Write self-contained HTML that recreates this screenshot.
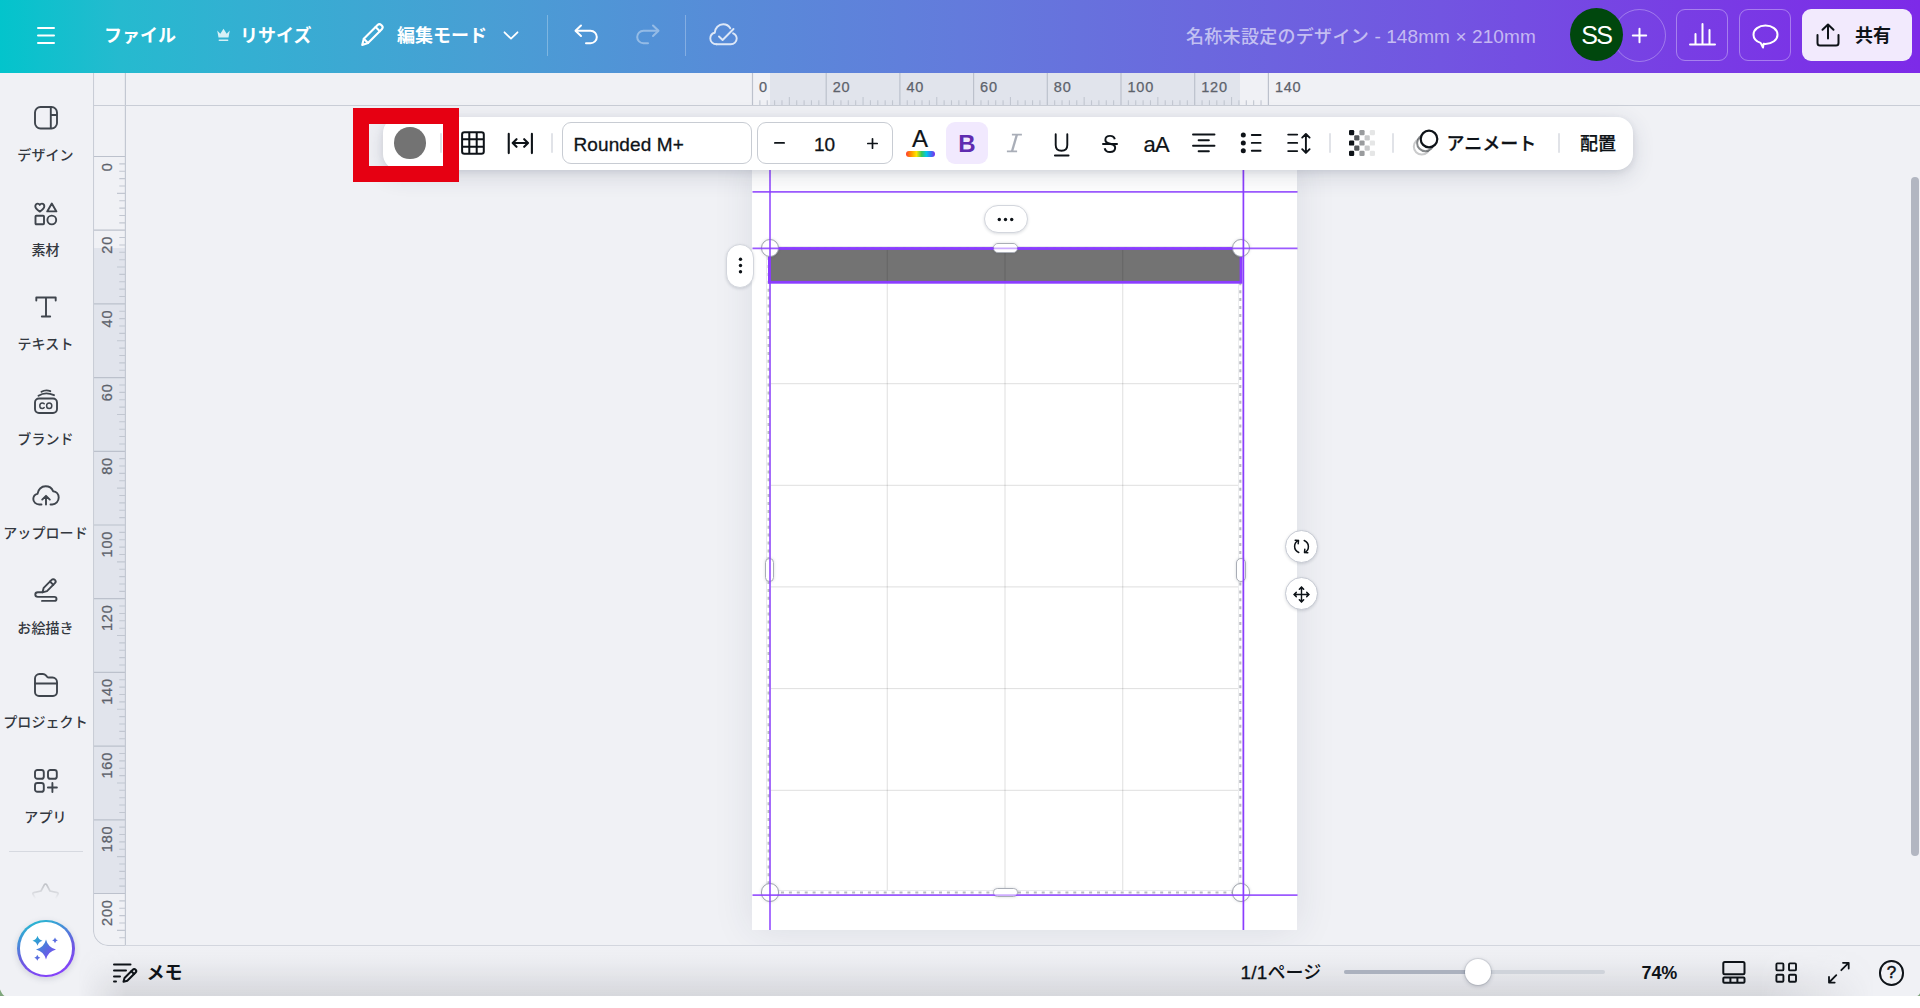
<!DOCTYPE html>
<html lang="ja">
<head>
<meta charset="utf-8">
<title>名称未設定のデザイン - Canva</title>
<style>
*{box-sizing:border-box;margin:0;padding:0}
html,body{width:1920px;height:1008px;overflow:hidden;background:#fff}
body{font-family:"Liberation Sans","Noto Sans CJK JP",sans-serif;color:#0e1318;-webkit-font-smoothing:antialiased}
#app{position:relative;width:1920px;height:1008px;overflow:hidden;background:#fff}
#ui{position:absolute;left:0;top:0;width:1920px;height:996px;background:#f0f1f5;overflow:hidden}
.abs{position:absolute}
svg{display:block;overflow:visible}
/* header */
#hdr{position:absolute;left:0;top:0;width:1920px;height:73px;background:linear-gradient(90deg,rgb(3,196,204) 0%,rgb(37,186,207) 6.25%,rgb(51,176,210) 12.5%,rgb(72,159,212) 25%,rgb(87,140,216) 37.5%,rgb(99,123,220) 50%,rgb(107,104,222) 62.5%,rgb(114,85,225) 75%,rgb(120,62,228) 87.5%,rgb(125,42,232) 100%);color:#fff}
#hdr .t{position:absolute;top:0;height:73px;line-height:73px;font-size:18px;font-weight:700;white-space:nowrap;letter-spacing:0}
#hdr .div{position:absolute;top:15px;width:1px;height:41px;background:rgba(255,255,255,.28)}
.hbtn{position:absolute;top:9px;width:52px;height:52px;border:1px solid rgba(255,255,255,.35);border-radius:9px}
/* sidebar */
#side{position:absolute;left:0;top:72px;width:93px;height:924px}
.sitem{position:absolute;left:0;width:91px;text-align:center;font-size:14px;font-weight:500;color:#33383f;white-space:nowrap;letter-spacing:.1px}
.sico{position:absolute}
.rl{font-family:"Liberation Sans",sans-serif;font-size:14.5px;fill:#5d626b;letter-spacing:.8px;stroke:#5d626b;stroke-width:.25px}
/* canvas */
#page{position:absolute;left:752px;top:156px;width:545.300px;height:774px;background:#fff;box-shadow:0 0 38px rgba(40,50,80,.10)}
.handle{position:absolute;background:#fff;border:1px solid #a9adb6;box-shadow:0 0 3px rgba(40,50,70,.18)}
.pill{position:absolute;background:#fff;border:1px solid #d3d6dd;box-shadow:0 1px 3px rgba(40,50,70,.16)}
/* toolbar */
#tb{position:absolute;left:383px;top:117px;width:1250px;height:53px;background:#fff;border-radius:16px;box-shadow:0 2px 6px rgba(50,60,90,.10),0 6px 22px rgba(50,60,90,.16)}
#tb .sep{position:absolute;top:16.400px;width:2.400px;height:20px;background:#e1e3e8;border-radius:1.200px;margin-left:-.2px}
#tb .tx{position:absolute;top:0;height:55px;line-height:55.500px;font-size:18px;font-weight:500;white-space:nowrap;color:#0e1318}
.lat{font-size:19px !important;-webkit-text-stroke:.3px currentColor}
/* footer */
#ft{position:absolute;left:93px;top:946px;width:1827px;height:50px}
#ft .tx{position:absolute;top:0;height:50px;line-height:54.500px;font-size:17px;font-weight:500;white-space:nowrap;color:#0e1318}
</style>
</head>
<body>
<div id="app">
<div id="ui">
<div class="abs" style="left:78px;top:946px;width:1842px;height:50px;pointer-events:none;background:linear-gradient(180deg,rgba(90,92,100,0) 0%,rgba(90,92,100,.02) 25%,rgba(90,92,100,.07) 55%,rgba(90,92,100,.13) 80%,rgba(90,92,100,.17) 100%);-webkit-mask-image:linear-gradient(90deg,transparent 0,#000 48px,#000 calc(100% - 160px),transparent calc(100% - 45px));mask-image:linear-gradient(90deg,transparent 0,#000 48px,#000 calc(100% - 160px),transparent calc(100% - 45px))"></div>
<svg class="abs" style="left:0;top:988px" width="6" height="8" viewBox="0 0 6 8"><path d="M0 1.500C1.200 4.500 2.800 6.800 4.500 8H0z" fill="#7fa67c"/></svg>
<svg class="abs" style="left:1917px;top:993px" width="3" height="3" viewBox="0 0 3 3"><path d="M3 .3C2.300 1.600 1.400 2.500.3 3H3z" fill="#7fa67c"/></svg>
<div id="hdr">
  <!-- hamburger -->
  <svg class="abs" style="left:33.700px;top:23.200px" width="24" height="24" viewBox="0 0 24 24" fill="none" stroke="#fff" stroke-width="2" stroke-linecap="round"><path d="M4 5h16M4 12.5h16M4 20h16"/></svg>
  <div class="t" style="left:104px">ファイル</div>
  <!-- crown -->
  <svg class="abs" style="left:216px;top:28px" width="15" height="14" viewBox="0 0 15 14" fill="#d6f0f6"><path d="M1.2 2.6l3.1 3.2L7.5 .8l3.2 5 3.1-3.2-1.3 7H2.5z"/><rect x="2.6" y="11.4" width="9.8" height="1.5" rx=".7"/></svg>
  <div class="t" style="left:240px">リサイズ</div>
  <!-- pencil -->
  <svg class="abs" style="left:360px;top:23px" width="24" height="24" viewBox="0 0 24 24" fill="none" stroke="#fff" stroke-width="2.1" stroke-linecap="round" stroke-linejoin="round"><path d="M2.2 22l1.6-6.2L17.6 2c1-1 2.600-1 3.600 0l.6.6c1 1 1 2.600 0 3.600L8 20z"/><path d="M3.800 15.800L8 20"/><path d="M15.600 4l4.200 4.200"/></svg>
  <div class="t" style="left:397px">編集モード</div>
  <svg class="abs" style="left:503px;top:31px" width="16" height="9" viewBox="0 0 16 9" fill="none" stroke="#fff" stroke-width="1.8" stroke-linecap="round" stroke-linejoin="round"><path d="M1.500 1.300L8 7.600l6.500-6.300"/></svg>
  <div class="div" style="left:547px"></div>
  <!-- undo -->
  <svg class="abs" style="left:574px;top:24px" width="25" height="21" viewBox="0 0 25 21" fill="none" stroke="#fff" stroke-width="2" stroke-linecap="round" stroke-linejoin="round"><path d="M7 1.500L1.500 6.800 7 12"/><path d="M2 6.800h14.500c3.600 0 6.300 2.700 6.300 6.200s-2.700 6.200-6.300 6.200H12"/></svg>
  <!-- redo -->
  <svg class="abs" style="left:635px;top:24px;opacity:.38" width="25" height="21" viewBox="0 0 25 21" fill="none" stroke="#fff" stroke-width="2" stroke-linecap="round" stroke-linejoin="round"><path d="M18 1.500l5.500 5.300L18 12"/><path d="M23 6.800H8.500C4.900 6.800 2.200 9.500 2.200 13s2.700 6.200 6.300 6.200H13"/></svg>
  <div class="div" style="left:685px"></div>
  <!-- cloud check -->
  <svg class="abs" style="left:709px;top:22px;opacity:.8" width="29" height="24" viewBox="0 0 29 24" fill="none" stroke="#fff" stroke-width="1.900" stroke-linecap="round" stroke-linejoin="round"><path d="M7.500 22.300C4 22.300 1.300 19.700 1.300 16.400c0-2.800 1.900-5.100 4.500-5.700C6 6 9.600 2.300 14.200 2.300c3 0 5.700 1.600 7.100 4"/><path d="M7.500 22.300h14.200c3.300 0 6-2.500 6-5.700 0-2.400-1.500-4.400-3.600-5.300"/><path d="M10 14.500l3.600 3.500L24.500 7"/></svg>
  <div class="t" style="left:1186px;font-weight:500;color:rgba(255,255,255,.6);font-size:18px;letter-spacing:.3px">名称未設定のデザイン<span style="font-size:19px;letter-spacing:.1px"> - 148mm × 210mm</span></div>
  <!-- plus circle -->
  <div class="abs" style="left:1613px;top:9px;width:53px;height:53px;border-radius:50%;border:1px solid rgba(255,255,255,.3)"></div>
  <svg class="abs" style="left:1631px;top:27px" width="17" height="17" viewBox="0 0 17 17" stroke="#fff" stroke-width="2" stroke-linecap="round"><path d="M8.500 1.800v13.400M1.800 8.500h13.400"/></svg>
  <!-- avatar -->
  <div class="abs" style="left:1570.200px;top:8.200px;width:53.300px;height:53.300px;border-radius:50%;background:#00470d;color:#fff;font-size:25px;line-height:54px;text-align:center;font-weight:400;letter-spacing:-1.5px;text-indent:-1px">SS</div>
  <!-- chart -->
  <div class="hbtn" style="left:1676px"></div>
  <svg class="abs" style="left:1689px;top:22px" width="27" height="24" viewBox="0 0 27 24" fill="none" stroke="#fff" stroke-width="2" stroke-linecap="round"><path d="M1 22.500h25M6.500 22V12M13.500 22V2M20.500 22V8"/></svg>
  <!-- comment -->
  <div class="hbtn" style="left:1739px"></div>
  <svg class="abs" style="left:1752px;top:24px" width="27" height="25" viewBox="0 0 27 25" fill="none" stroke="#fff" stroke-width="2" stroke-linejoin="round"><path d="M13.500 1.500c6.600 0 12 3.900 12 9.200 0 5.200-5.400 9.200-12 9.200-.6 0-1.300 0-1.900-.1L11 23.500l-2.400-4.600C4.400 17.500 1.500 14.400 1.500 10.700c0-5.300 5.400-9.200 12-9.200z"/></svg>
  <!-- share -->
  <div class="abs" style="left:1802px;top:9px;width:110px;height:52px;border-radius:9px;background:#f2eafd"></div>
  <svg class="abs" style="left:1816px;top:23px" width="24" height="24" viewBox="0 0 24 24" fill="none" stroke="#0e1318" stroke-width="2" stroke-linecap="round" stroke-linejoin="round"><path d="M12 15.500V1.500M6.500 6.800L12 1.500l5.500 5.300"/><path d="M1.500 12v8c0 1.400 1.100 2.500 2.500 2.500h16c1.400 0 2.500-1.100 2.500-2.500v-8"/></svg>
  <div class="t" style="left:1855px;color:#0e1318">共有</div>
</div>
<div id="side">
  <!-- design -->
  <svg class="sico" style="left:34px;top:34px" width="24" height="24" viewBox="0 0 24 24" fill="none" stroke="#3f454d" stroke-width="1.900" stroke-linejoin="round"><rect x="1" y="1" width="22" height="21.500" rx="5.500"/><path d="M16.800 1v21.500M16.800 9H23"/></svg>
  <div class="sitem" style="top:72px;line-height:22px">デザイン</div>
  <!-- elements -->
  <svg class="sico" style="left:34px;top:130px" width="24" height="24" viewBox="0 0 24 24" fill="none" stroke="#3f454d" stroke-width="1.900" stroke-linejoin="round"><path d="M5.800 9.600C3 7.700 1.300 6.100 1.300 4.200c0-1.500 1.100-2.600 2.400-2.600.9 0 1.700.5 2.100 1.300.4-.8 1.200-1.300 2.100-1.300 1.300 0 2.400 1.100 2.400 2.600 0 1.900-1.700 3.500-4.500 5.400z"/><path d="M17.800 1.600l4.600 7.800h-9.200z"/><rect x="1.500" y="13.800" width="8.500" height="8.500" rx=".8"/><circle cx="17.800" cy="18" r="4.400"/></svg>
  <div class="sitem" style="top:167px;line-height:22px">素材</div>
  <!-- text -->
  <svg class="sico" style="left:35px;top:224px" width="22" height="22" viewBox="0 0 22 22" fill="none" stroke="#3f454d" stroke-width="1.900" stroke-linecap="round" stroke-linejoin="round"><path d="M1.300 4.500V1.500h19.400v3M11 1.500v19M6.800 20.500h8.400"/></svg>
  <div class="sitem" style="top:261px;line-height:22px">テキスト</div>
  <!-- brand -->
  <svg class="sico" style="left:34px;top:317px" width="24" height="25" viewBox="0 0 24 25" fill="none" stroke="#3f454d" stroke-width="1.900" stroke-linecap="round" stroke-linejoin="round"><rect x="1" y="9.500" width="22" height="14.500" rx="4"/><path d="M4.500 6.800c3-2 9-3.600 15.500-.6"/><path d="M7.500 2.800c2.600-1.600 5.800-1.900 8.800-.6"/><path d="M10.200 14.800c-.5-.6-1.100-.9-1.900-.9-1.500 0-2.500 1.100-2.500 2.800s1 2.800 2.500 2.800c.8 0 1.400-.3 1.900-.9" stroke-width="1.500"/><ellipse cx="15.200" cy="16.700" rx="2.600" ry="2.800" stroke-width="1.500"/></svg>
  <div class="sitem" style="top:356px;line-height:22px">ブランド</div>
  <!-- upload -->
  <svg class="sico" style="left:32px;top:413px" width="28" height="21" viewBox="0 0 28 21" fill="none" stroke="#3f454d" stroke-width="1.900" stroke-linecap="round" stroke-linejoin="round"><path d="M9.500 19.500H7.200c-3.300 0-5.900-2.400-5.900-5.400 0-2.500 1.700-4.600 4.200-5.200C6 4.500 9.300 1.300 13.600 1.300c3.400 0 6.300 2 7.500 4.900 3.200.3 5.600 3 5.600 6.400 0 3.700-2.800 6.900-6.500 6.900h-1.700"/><path d="M14 19.500v-8.200M10.200 14.600L14 10.800l3.800 3.800"/></svg>
  <div class="sitem" style="top:450px;line-height:22px">アップロード</div>
  <!-- draw -->
  <svg class="sico" style="left:34px;top:506px" width="24" height="24" viewBox="0 0 24 24" fill="none" stroke="#3f454d" stroke-width="1.900" stroke-linecap="round" stroke-linejoin="round"><path d="M8.500 14.300l1.200-4.500L17.600 1.900c.9-.9 2.400-.9 3.300 0s.9 2.400 0 3.300L13 13.100z"/><path d="M16 3.500l3.300 3.300"/><path d="M8.500 14.300H3.800c-1.400 0-2.500 1-2.500 2.300s1.100 2.300 2.500 2.300h16.500c1.200 0 2.200.9 2.200 2s-1 2-2.200 2H8"/></svg>
  <div class="sitem" style="top:545px;line-height:22px">お絵描き</div>
  <!-- projects -->
  <svg class="sico" style="left:34px;top:601px" width="24" height="24" viewBox="0 0 24 24" fill="none" stroke="#3f454d" stroke-width="1.900" stroke-linecap="round" stroke-linejoin="round"><path d="M1 19V5.500C1 3 3 1 5.500 1h3.300c1.200 0 2.300.5 3.100 1.400l1.300 1.500c.4.400.9.600 1.400.6h3.900C21 4.500 23 6.500 23 9v10c0 2.200-1.800 4-4 4H5c-2.200 0-4-1.800-4-4z"/><path d="M1 10.500h22"/></svg>
  <div class="sitem" style="top:639px;line-height:22px">プロジェクト</div>
  <!-- apps -->
  <svg class="sico" style="left:34px;top:697px" width="24" height="24" viewBox="0 0 24 24" fill="none" stroke="#3f454d" stroke-width="1.900" stroke-linecap="round" stroke-linejoin="round"><rect x="1" y="1" width="8.800" height="8.800" rx="2.400"/><rect x="14" y="1" width="8.800" height="8.800" rx="2.400"/><rect x="1" y="14" width="8.800" height="8.800" rx="2.400"/><path d="M18.400 14v9M13.900 18.500h9"/></svg>
  <div class="sitem" style="top:734px;line-height:22px">アプリ</div>
  <div class="abs" style="left:9px;top:778.600px;width:73.500px;height:1.200px;background:#d6d9e0"></div>
  <!-- faded star -->
  <svg class="sico" style="left:30px;top:808px" width="32" height="20" viewBox="30 880 32 20" fill="none" stroke-width="1.700" stroke-linejoin="round" stroke-linecap="round"><defs><linearGradient id="fs" x1="0" y1="882" x2="0" y2="899" gradientUnits="userSpaceOnUse"><stop offset="0" stop-color="#3f454d" stop-opacity=".3"/><stop offset=".6" stop-color="#3f454d" stop-opacity=".14"/><stop offset="1" stop-color="#3f454d" stop-opacity="0"/></linearGradient></defs><path stroke="url(#fs)" d="M35.500 899L33 894.200c-.4-.7 0-1.400.8-1.600l7.200-1.600 3.400-6.300c.5-.9 1.700-.9 2.200 0l3.400 6.300 7.200 1.600c.8.200 1.200.9.800 1.600L55.500 899"/></svg>
  <!-- magic button -->
  <div class="abs" style="left:17.200px;top:847.800px;width:57.500px;height:57.500px;border-radius:50%;background:linear-gradient(160deg,#22c1d0 5%,#6a5be0 55%,#8b3dff 95%);box-shadow:0 2px 6px rgba(60,70,100,.18)"></div>
  <div class="abs" style="left:19.500px;top:850.100px;width:52.900px;height:52.900px;border-radius:50%;background:#fff"></div>
  <svg class="sico" style="left:31px;top:862px" width="30" height="30" viewBox="0 0 30 30"><defs><linearGradient id="mg" x1="0" y1="0" x2="1" y2="1"><stop offset="0" stop-color="#1fb6cf"/><stop offset=".55" stop-color="#5a6ae0"/><stop offset="1" stop-color="#8b3dff"/></linearGradient></defs><path fill="url(#mg)" d="M15.00 5.50Q17.00 13.50 25.00 15.50Q17.00 17.50 15.00 25.50Q13.00 17.50 5.00 15.50Q13.00 13.50 15.00 5.50zM6.50 1.80Q7.50 5.80 11.50 6.80Q7.50 7.80 6.50 11.80Q5.50 7.80 1.50 6.80Q5.50 5.80 6.50 1.80zM24.00 3.40Q24.58 5.72 26.90 6.30Q24.58 6.88 24.00 9.20Q23.42 6.88 21.10 6.30Q23.42 5.72 24.00 3.40zM6.30 20.80Q6.90 23.20 9.30 23.80Q6.90 24.40 6.30 26.80Q5.70 24.40 3.30 23.80Q5.70 23.20 6.30 20.80z"/></svg>
</div>
<div id="hr" class="abs" style="left:125px;top:73px;width:1795px;height:33px;overflow:hidden">
<div class="abs" style="left:644.7px;top:0;width:470.6px;height:32px;background:#e1e4ec"></div>
<svg class="abs" style="left:0;top:0" width="1795" height="33" viewBox="125 73 1795 33">
<path d="M759.87 100.3V105.5M767.24 100.3V105.5M774.61 100.3V105.5M781.98 100.3V105.5M796.72 100.3V105.5M804.09 100.3V105.5M811.46 100.3V105.5M818.83 100.3V105.5M833.57 100.3V105.5M840.94 100.3V105.5M848.31 100.3V105.5M855.68 100.3V105.5M870.42 100.3V105.5M877.79 100.3V105.5M885.16 100.3V105.5M892.53 100.3V105.5M907.27 100.3V105.5M914.64 100.3V105.5M922.01 100.3V105.5M929.38 100.3V105.5M944.12 100.3V105.5M951.49 100.3V105.5M958.86 100.3V105.5M966.23 100.3V105.5M980.97 100.3V105.5M988.34 100.3V105.5M995.71 100.3V105.5M1003.08 100.3V105.5M1017.82 100.3V105.5M1025.19 100.3V105.5M1032.56 100.3V105.5M1039.93 100.3V105.5M1054.67 100.3V105.5M1062.04 100.3V105.5M1069.41 100.3V105.5M1076.78 100.3V105.5M1091.52 100.3V105.5M1098.89 100.3V105.5M1106.26 100.3V105.5M1113.63 100.3V105.5M1128.37 100.3V105.5M1135.74 100.3V105.5M1143.11 100.3V105.5M1150.48 100.3V105.5M1165.22 100.3V105.5M1172.59 100.3V105.5M1179.96 100.3V105.5M1187.33 100.3V105.5M1202.07 100.3V105.5M1209.44 100.3V105.5M1216.81 100.3V105.5M1224.18 100.3V105.5M1238.92 100.3V105.5M1246.29 100.3V105.5M1253.66 100.3V105.5M1261.03 100.3V105.5M789.35 97V105.5M863.05 97V105.5M936.75 97V105.5M1010.45 97V105.5M1084.15 97V105.5M1157.85 97V105.5M1231.55 97V105.5" stroke="#c2c7d1" stroke-width="1.1" fill="none"/>
<path d="M752.50 73V105.5M826.20 73V105.5M899.90 73V105.5M973.60 73V105.5M1047.30 73V105.5M1121.00 73V105.5M1194.70 73V105.5M1268.40 73V105.5" stroke="#bcc1cc" stroke-width="1.2" fill="none"/>
<path d="M125 105.5H1920" stroke="#c9cdd6" stroke-width="1.2" fill="none"/>
<text x="759.0" y="92" class="rl">0</text>
<text x="832.7" y="92" class="rl">20</text>
<text x="906.4" y="92" class="rl">40</text>
<text x="980.1" y="92" class="rl">60</text>
<text x="1053.8" y="92" class="rl">80</text>
<text x="1127.5" y="92" class="rl">100</text>
<text x="1201.2" y="92" class="rl">120</text>
<text x="1274.9" y="92" class="rl">140</text>
</svg></div>
<div id="vr" class="abs" style="left:93px;top:73px;width:33px;height:873px;overflow:hidden;border-bottom-left-radius:15px">
<div class="abs" style="left:0;top:175.3px;width:32px;height:645.1px;background:#e1e4ec"></div>
<svg class="abs" style="left:0;top:0" width="33" height="873" viewBox="93 73 33 873">
<path d="M119.3 163.87H125.5M119.3 171.24H125.5M119.3 178.61H125.5M119.3 185.98H125.5M119.3 200.72H125.5M119.3 208.09H125.5M119.3 215.46H125.5M119.3 222.83H125.5M119.3 237.57H125.5M119.3 244.94H125.5M119.3 252.31H125.5M119.3 259.68H125.5M119.3 274.42H125.5M119.3 281.79H125.5M119.3 289.16H125.5M119.3 296.53H125.5M119.3 311.27H125.5M119.3 318.64H125.5M119.3 326.01H125.5M119.3 333.38H125.5M119.3 348.12H125.5M119.3 355.49H125.5M119.3 362.86H125.5M119.3 370.23H125.5M119.3 384.97H125.5M119.3 392.34H125.5M119.3 399.71H125.5M119.3 407.08H125.5M119.3 421.82H125.5M119.3 429.19H125.5M119.3 436.56H125.5M119.3 443.93H125.5M119.3 458.67H125.5M119.3 466.04H125.5M119.3 473.41H125.5M119.3 480.78H125.5M119.3 495.52H125.5M119.3 502.89H125.5M119.3 510.26H125.5M119.3 517.63H125.5M119.3 532.37H125.5M119.3 539.74H125.5M119.3 547.11H125.5M119.3 554.48H125.5M119.3 569.22H125.5M119.3 576.59H125.5M119.3 583.96H125.5M119.3 591.33H125.5M119.3 606.07H125.5M119.3 613.44H125.5M119.3 620.81H125.5M119.3 628.18H125.5M119.3 642.92H125.5M119.3 650.29H125.5M119.3 657.66H125.5M119.3 665.03H125.5M119.3 679.77H125.5M119.3 687.14H125.5M119.3 694.51H125.5M119.3 701.88H125.5M119.3 716.62H125.5M119.3 723.99H125.5M119.3 731.36H125.5M119.3 738.73H125.5M119.3 753.47H125.5M119.3 760.84H125.5M119.3 768.21H125.5M119.3 775.58H125.5M119.3 790.32H125.5M119.3 797.69H125.5M119.3 805.06H125.5M119.3 812.43H125.5M119.3 827.17H125.5M119.3 834.54H125.5M119.3 841.91H125.5M119.3 849.28H125.5M119.3 864.02H125.5M119.3 871.39H125.5M119.3 878.76H125.5M119.3 886.13H125.5M119.3 900.87H125.5M119.3 908.24H125.5M119.3 915.61H125.5M119.3 922.98H125.5M119.3 937.72H125.5M117 193.35H125.5M117 267.05H125.5M117 340.75H125.5M117 414.45H125.5M117 488.15H125.5M117 561.85H125.5M117 635.55H125.5M117 709.25H125.5M117 782.95H125.5M117 856.65H125.5M117 930.35H125.5" stroke="#c2c7d1" stroke-width="1.1" fill="none"/>
<path d="M93 156.50H125.5M93 230.20H125.5M93 303.90H125.5M93 377.60H125.5M93 451.30H125.5M93 525.00H125.5M93 598.70H125.5M93 672.40H125.5M93 746.10H125.5M93 819.80H125.5M93 893.50H125.5" stroke="#bcc1cc" stroke-width="1.2" fill="none"/>
<path d="M125.5 73V945.5" stroke="#c3c8d2" stroke-width="1.400" fill="none"/>
<path d="M93.500 73V930.5a15 15 0 0 0 15 15H126" stroke="#c9cdd6" stroke-width="1.1" fill="none"/>
<path d="M93 105.5H126" stroke="#c9cdd6" stroke-width="1.2" fill="none"/>
<text transform="translate(112.2 162.3) rotate(-90)" text-anchor="end" class="rl">0</text>
<text transform="translate(112.2 236.0) rotate(-90)" text-anchor="end" class="rl">20</text>
<text transform="translate(112.2 309.7) rotate(-90)" text-anchor="end" class="rl">40</text>
<text transform="translate(112.2 383.4) rotate(-90)" text-anchor="end" class="rl">60</text>
<text transform="translate(112.2 457.1) rotate(-90)" text-anchor="end" class="rl">80</text>
<text transform="translate(112.2 530.8) rotate(-90)" text-anchor="end" class="rl">100</text>
<text transform="translate(112.2 604.5) rotate(-90)" text-anchor="end" class="rl">120</text>
<text transform="translate(112.2 678.2) rotate(-90)" text-anchor="end" class="rl">140</text>
<text transform="translate(112.2 751.9) rotate(-90)" text-anchor="end" class="rl">160</text>
<text transform="translate(112.2 825.6) rotate(-90)" text-anchor="end" class="rl">180</text>
<text transform="translate(112.2 899.3) rotate(-90)" text-anchor="end" class="rl">200</text>
</svg></div>
<div class="abs" style="left:125px;top:945px;width:1795px;height:1px;background:#d3d6de"></div>
<div id="ws" class="abs" style="left:126px;top:106px;width:1794px;height:839px;overflow:hidden">
<div class="abs" style="left:-126px;top:-106px;width:1920px;height:1008px">
  <div id="page"></div>
  <svg class="abs" style="left:0;top:0" width="1920" height="1008" viewBox="0 0 1920 1008" fill="none">
    <!-- grid lines -->
    <path d="M887.250 248.400V892.500M1005 248.400V892.500M1122.750 248.400V892.500" stroke="#000" stroke-opacity=".13" stroke-width="1"/>
    <path d="M769.500 383.700H1240.500M769.500 485.300H1240.500M769.500 586.900H1240.500M769.500 688.600H1240.500M769.500 790.300H1240.500" stroke="#000" stroke-opacity=".13" stroke-width="1"/>
    <!-- dashed table outline -->
    <rect x="768.600" y="248.400" width="471.700" height="644.100" stroke="#d9dbdf" stroke-width="4.600"/>
    <rect x="768.600" y="248.400" width="471.700" height="644.100" stroke="#fff" stroke-width="3.600"/>
    <rect x="768.600" y="248.400" width="471.700" height="644.100" stroke="#b9bcc2" stroke-width="2.100" stroke-dasharray="3 4.900"/>
    <!-- table header fill -->
    <rect x="769.500" y="248.400" width="471" height="33.800" fill="#737373"/>
    <path d="M887.250 248.400V282.200M1005 248.400V282.200M1122.750 248.400V282.200" stroke="#000" stroke-opacity=".13" stroke-width="1"/>
    <!-- selection -->
    <rect x="769.400" y="248.500" width="471.600" height="33.800" stroke="#8b3dff" stroke-width="2.800"/>
  </svg>
  <!-- corner handles -->
  <div class="handle" style="left:761px;top:239.500px;width:18.400px;height:18.400px;border-radius:50%;background:#fff;margin:-.6px 0 0 -.5px;border-color:#9ea3ac"></div>
  <div class="handle" style="left:1232px;top:239.500px;width:18.400px;height:18.400px;border-radius:50%;background:#fff;margin:-.6px 0 0 -.5px;border-color:#9ea3ac"></div>
  <div class="handle" style="left:761px;top:884px;width:18.400px;height:18.400px;border-radius:50%;background:#fff;margin:-.6px 0 0 -.5px;border-color:#9ea3ac"></div>
  <div class="handle" style="left:1232px;top:884px;width:18.400px;height:18.400px;border-radius:50%;background:#fff;margin:-.6px 0 0 -.5px;border-color:#9ea3ac"></div>
  <!-- edge handles -->
  <div class="handle" style="left:993px;top:243.300px;width:24.500px;height:9.500px;border-radius:5px"></div>
  <div class="handle" style="left:993px;top:887.800px;width:24.500px;height:9.500px;border-radius:5px"></div>
  <div class="handle" style="left:764.700px;top:557.500px;width:9.500px;height:24.500px;border-radius:5px"></div>
  <div class="handle" style="left:1236px;top:557.500px;width:9.500px;height:24.500px;border-radius:5px"></div>
  <svg class="abs" style="left:0;top:0" width="1920" height="1008" viewBox="0 0 1920 1008" fill="none">
    <path d="M770 156V930" stroke="#8b3dff" stroke-width="1.900" stroke-opacity=".78"/><path d="M1243.400 156V930" stroke="#8b3dff" stroke-width="1.700"/>
    <path d="M752.500 191.900H1297.500M752.500 248.400H1297.500M752.500 895.200H1297.500" stroke="#8b3dff" stroke-width="1.800" stroke-opacity=".85"/>
  </svg>
  <div class="abs" style="left:994px;top:244.300px;width:22.500px;height:7.500px;border-radius:4px;background:rgba(255,255,255,.5)"></div>
  <div class="abs" style="left:994px;top:888.800px;width:22.500px;height:7.500px;border-radius:4px;background:rgba(255,255,255,.5)"></div>
  <!-- more pills -->
  <div class="pill" style="left:983.500px;top:205.400px;width:44px;height:28px;border-radius:14px"></div>
  <svg class="abs" style="left:997px;top:217px" width="17" height="5" viewBox="0 0 17 5" fill="#0e1318"><circle cx="2.300" cy="2.500" r="1.700"/><circle cx="8.500" cy="2.500" r="1.700"/><circle cx="14.700" cy="2.500" r="1.700"/></svg>
  <div class="pill" style="left:726px;top:243.500px;width:28px;height:44px;border-radius:14px"></div>
  <svg class="abs" style="left:737.500px;top:257px" width="5" height="17" viewBox="0 0 5 17" fill="#0e1318"><circle cy="2.300" cx="2.500" r="1.700"/><circle cy="8.500" cx="2.500" r="1.700"/><circle cy="14.700" cx="2.500" r="1.700"/></svg>
  <!-- rotate / move -->
  <div class="pill" style="left:1284.700px;top:529.700px;width:33px;height:33px;border-radius:50%;border-color:#c6cad3"></div>
  <svg class="abs" style="left:1293px;top:538px" width="17" height="17" viewBox="0 0 17 17" fill="none" stroke="#0e1318" stroke-width="1.500" stroke-linecap="round" stroke-linejoin="round"><path d="M5.800 14.500C3.200 13.400 1.600 11 1.600 8.300c0-2.500 1.500-4.700 3.700-5.700"/><path d="M2.200 2.300l3.300.2-.3 3.200"/><path d="M11.200 2.500c2.600 1.100 4.200 3.500 4.200 6.200 0 2.500-1.500 4.700-3.700 5.700"/><path d="M14.800 14.700l-3.300-.2.300-3.200"/></svg>
  <div class="pill" style="left:1284.700px;top:577.300px;width:33px;height:33px;border-radius:50%;border-color:#c6cad3"></div>
  <svg class="abs" style="left:1293px;top:585.500px" width="17" height="17" viewBox="0 0 17 17" fill="none" stroke="#0e1318" stroke-width="1.400" stroke-linecap="round" stroke-linejoin="round"><path d="M8.500 1.200v14.600M1.200 8.500h14.600"/><path d="M6.300 3.300l2.200-2.200 2.200 2.200M6.300 13.700l2.200 2.200 2.200-2.200M3.300 6.300L1.100 8.500l2.200 2.200M13.700 6.300l2.200 2.200-2.200 2.200" fill="#0e1318"/></svg>
  <!-- scrollbar -->
  <div class="abs" style="left:1911px;top:177.300px;width:8.200px;height:678.700px;border-radius:4.100px;background:#b2b6c1"></div>
</div>
</div>
<div id="tb">
  <!-- color circle -->
  <div class="abs" style="left:11px;top:10.300px;width:31.500px;height:31.500px;border-radius:50%;background:#737373"></div>
  <div class="sep" style="left:57px"></div>
  <!-- table icon -->
  <svg class="abs" style="left:78px;top:14px" width="24" height="24" viewBox="0 0 24 24" fill="none" stroke="#0e1318" stroke-width="2" stroke-linejoin="round"><rect x="1.100" y="1.200" width="21.700" height="21.600" rx="2.300"/><path d="M8.300 1v22M15.700 1v22M1 8.300h22M1 15.700h22"/></svg>
  <!-- width icon -->
  <svg class="abs" style="left:124px;top:15px" width="27" height="22" viewBox="0 0 27 22" fill="none" stroke="#0e1318" stroke-width="2.100" stroke-linecap="round" stroke-linejoin="round"><path d="M1.750 1.900v19.200M24.900 1.900v19.200M6 11h14.700M9.500 7.200L5.700 11l3.800 3.800M17.200 7.200L21 11l-3.800 3.800"/></svg>
  <div class="sep" style="left:168px"></div>
  <!-- font box -->
  <div class="abs" style="left:179px;top:5px;width:189.500px;height:42px;border:1px solid #c8ccd3;border-radius:9px"></div>
  <div class="tx lat" style="left:190.500px;letter-spacing:.1px">Rounded M+</div>
  <!-- size box -->
  <div class="abs" style="left:374px;top:5px;width:136px;height:42px;border:1px solid #c8ccd3;border-radius:9px"></div>
  <svg class="abs" style="left:390.500px;top:25px" width="11" height="2" viewBox="0 0 11 2"><rect width="11" height="1.800" rx=".9" fill="#0e1318"/></svg>
  <div class="tx lat" style="left:421.500px;width:40px;text-align:center">10</div>
  <svg class="abs" style="left:483.500px;top:20.500px" width="11" height="11" viewBox="0 0 11 11" stroke="#0e1318" stroke-width="1.700" stroke-linecap="round"><path d="M5.500 .8v9.400M.8 5.500h9.400"/></svg>
  <!-- text color -->
  <div class="abs" style="left:522px;top:7px;width:30px;height:30px;line-height:30px;font-size:24px;text-align:center;color:#0e1318;-webkit-text-stroke:.2px #0e1318">A</div>
  <div class="abs" style="left:522.500px;top:34.300px;width:29px;height:6px;border-radius:3px;background:linear-gradient(90deg,#ff3b30 0%,#ff9500 18%,#ffe600 36%,#34c759 54%,#00c7e6 70%,#3478f6 85%,#7d2ae8 100%)"></div>
  <!-- bold -->
  <div class="abs" style="left:563px;top:5px;width:42px;height:42px;border-radius:9px;background:#f1e9fe"></div>
  <div class="abs" style="left:563px;top:5px;width:42px;height:42px;line-height:43px;text-align:center;font-size:24px;font-weight:700;color:#5f2cb0">B</div>
  <!-- italic -->
  <svg class="abs" style="left:622px;top:16px" width="18" height="20" viewBox="0 0 18 20" fill="none" stroke="#a9aeb8" stroke-linecap="butt"><path d="M6.900 1.600h10M1.900 18.400h10.200" stroke-width="1.600"/><path d="M11.900 1.600L7 18.400" stroke-width="2.300"/></svg>
  <!-- underline -->
  <svg class="abs" style="left:670px;top:15px" width="17" height="25" viewBox="0 0 17 25" fill="none" stroke="#0e1318" stroke-width="1.900" stroke-linecap="round"><path d="M2.700 2.300v10.600c0 3.600 2.300 5.800 5.800 5.800s5.800-2.200 5.800-5.800V2.300M1.900 23.500h13.700"/></svg>
  <!-- strike -->
  <div class="abs" style="left:714.500px;top:5px;width:24px;height:42px;line-height:44px;text-align:center;font-size:25px;color:#0e1318;transform:scaleX(.86)">S</div>
  <div class="abs" style="left:719px;top:25.900px;width:15.500px;height:2px;background:#0e1318;border-radius:1px"></div>
  <!-- aA -->
  <div class="tx" style="left:760.500px;font-size:22px;font-weight:400;letter-spacing:-.7px;-webkit-text-stroke:.2px #0e1318">aA</div>
  <!-- align center -->
  <svg class="abs" style="left:808px;top:16px" width="26" height="20" viewBox="1191 133 26 20" fill="none" stroke="#0e1318" stroke-width="1.900" stroke-linecap="round"><path d="M1193 134.500h21.500M1198.600 140.200h10.300M1193 145.700h21.500M1198.600 151.200h10.300"/></svg>
  <!-- list -->
  <svg class="abs" style="left:857px;top:15px" width="23" height="23" viewBox="1240 132 23 23" fill="none" stroke="#0e1318" stroke-width="1.900" stroke-linecap="round"><circle cx="1243.300" cy="135" r="2.500" fill="#0e1318" stroke="none"/><circle cx="1243.300" cy="142.900" r="2.500" fill="#0e1318" stroke="none"/><circle cx="1243.300" cy="150.800" r="2.500" fill="#0e1318" stroke="none"/><path d="M1251.800 135h8.800M1251.800 142.900h8.800M1251.800 150.800h8.800"/></svg>
  <!-- line spacing -->
  <svg class="abs" style="left:903px;top:15px" width="26" height="23" viewBox="1286 132 26 23" fill="none" stroke="#0e1318" stroke-width="1.900" stroke-linecap="round" stroke-linejoin="round"><path d="M1288.200 134.600h9M1288.200 142.900h9M1288.200 151.100h9M1305.900 134.300v18.200M1302.200 137.600l3.700-3.700 3.700 3.700M1302.200 149.200l3.700 3.700 3.700-3.700"/></svg>
  <div class="sep" style="left:946px"></div>
  <!-- transparency -->
  <svg class="abs" style="left:966px;top:13px" width="26" height="26" viewBox="0 0 26 26"><g fill="#0e1318"><rect x="0" y="0" width="5.200" height="5.200" rx="1.200"/><rect x="0" y="10.400" width="5.200" height="5.200" rx="1.200"/><rect x="0" y="20.800" width="5.200" height="5.200" rx="1.200"/></g><g fill="#0e1318" opacity=".7"><rect x="5.200" y="5.200" width="5.200" height="5.200" rx="1.200"/><rect x="5.200" y="15.600" width="5.200" height="5.200" rx="1.200"/></g><g fill="#0e1318" opacity=".42"><rect x="10.400" y="0" width="5.200" height="5.200" rx="1.200"/><rect x="10.400" y="10.400" width="5.200" height="5.200" rx="1.200"/><rect x="10.400" y="20.800" width="5.200" height="5.200" rx="1.200"/></g><g fill="#0e1318" opacity=".22"><rect x="15.600" y="5.200" width="5.200" height="5.200" rx="1.200"/><rect x="15.600" y="15.600" width="5.200" height="5.200" rx="1.200"/></g><g fill="#0e1318" opacity=".1"><rect x="20.800" y="0" width="5.200" height="5.200" rx="1.200"/><rect x="20.800" y="10.400" width="5.200" height="5.200" rx="1.200"/><rect x="20.800" y="20.800" width="5.200" height="5.200" rx="1.200"/></g></svg>
  <div class="sep" style="left:1009px"></div>
  <!-- animate -->
  <svg class="abs" style="left:1028px;top:12px" width="28" height="28" viewBox="1411 129 28 28" fill="none" stroke-width="2"><circle cx="1421.800" cy="146.600" r="8" stroke="#0e1318" stroke-opacity=".22"/><circle cx="1425.300" cy="143" r="8.200" stroke="#0e1318" stroke-opacity=".5" fill="#fff"/><circle cx="1429" cy="139" r="8.300" stroke="#0e1318" stroke-width="2.200" fill="#fff"/></svg>
  <div class="tx" style="left:1063.500px;-webkit-text-stroke:.25px #0e1318">アニメート</div>
  <div class="sep" style="left:1175px"></div>
  <div class="tx" style="left:1197px;-webkit-text-stroke:.25px #0e1318">配置</div>
</div>
<!-- red annotation -->
<div class="abs" style="left:353px;top:108px;width:106px;height:74.400px;border:16px solid #e60012"></div>
<div id="ft">
  <svg class="abs" style="left:20px;top:17px" width="25" height="20" viewBox="0 0 25 20" fill="none" stroke="#0e1318" stroke-width="2" stroke-linecap="round" stroke-linejoin="round"><path d="M1 1.500h16.500M1 7.500h12M1 13.500h6M1 18.500h2"/><path d="M10.500 18.800l1-3.800L19.800 6.700c.8-.8 2-.8 2.800 0s.8 2 0 2.800L14.300 17.800z"/><path d="M18.300 8.200l2.800 2.800"/></svg>
  <div class="tx" style="left:53.500px;font-size:18px;font-weight:700">メモ</div>
  <div class="tx" style="left:1147.500px;font-size:18px"><span class="lat" style="letter-spacing:.2px">1/1</span>ページ</div>
  <div class="abs" style="left:1251px;top:24.200px;width:261px;height:4px;border-radius:2px;background:#cfd3da"></div>
  <div class="abs" style="left:1251px;top:24.200px;width:133px;height:4px;border-radius:2px;background:#abb1be"></div>
  <div class="abs" style="left:1371.500px;top:13.200px;width:26px;height:26px;border-radius:50%;background:#fff;box-shadow:0 0 0 1px rgba(60,70,90,.10),0 1px 4px rgba(40,50,70,.28)"></div>
  <div class="tx" style="left:1548.500px;font-weight:700;font-size:18px;letter-spacing:-.1px">74%</div>
  <!-- pages icon -->
  <svg class="abs" style="left:1628px;top:14px" width="26" height="25" viewBox="1721 960 26 25" fill="none" stroke="#0e1318" stroke-width="2" stroke-linejoin="round"><rect x="1723.300" y="962" width="21.200" height="12.200" rx="1.500"/><rect x="1723.300" y="977.600" width="21.200" height="5.200" rx="1"/><path d="M1730.400 977.600v5.200M1737.400 977.600v5.200"/></svg>
  <!-- grid icon -->
  <svg class="abs" style="left:1681px;top:15px" width="24" height="23" viewBox="1774 961 24 23" fill="none" stroke="#0e1318" stroke-width="1.900" stroke-linejoin="round"><rect x="1776.400" y="963.400" width="7" height="7" rx="1"/><rect x="1789" y="963.400" width="7" height="7" rx="1"/><rect x="1776.400" y="974.700" width="7" height="7" rx="1"/><rect x="1789" y="974.700" width="7" height="7" rx="1"/></svg>
  <!-- expand -->
  <svg class="abs" style="left:1735px;top:15px" width="22" height="22" viewBox="1828 961 22 22" fill="none" stroke="#0e1318" stroke-width="1.800" stroke-linecap="round" stroke-linejoin="round"><path d="M1841.300 970.200l7.300-7.300M1843 962.800h5.700v5.700M1836.300 975.200l-7.300 7.300M1834.700 982.600H1829v-5.700"/></svg>
  <!-- help -->
  <div class="abs" style="left:1785.700px;top:13.800px;width:25.800px;height:25.800px;border-radius:50%;border:2px solid #0e1318;text-align:center;line-height:22.500px;font-size:17px;font-weight:400;color:#0e1318;-webkit-text-stroke:.5px #0e1318">?</div>
</div>
</div>
</div>
</body>
</html>
